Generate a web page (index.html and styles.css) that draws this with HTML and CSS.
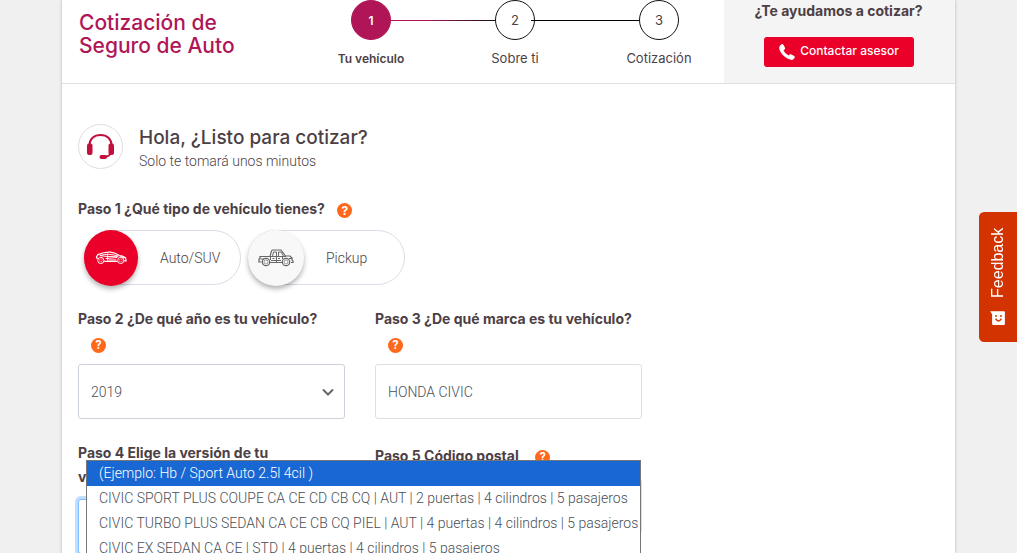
FILE: index.html
```html
<!DOCTYPE html>
<html lang="es">
<head>
<meta charset="utf-8">
<meta name="viewport" content="width=device-width, initial-scale=1">
<title>Cotización de Seguro de Auto</title>
<link rel="stylesheet" href="styles.css">
</head>
<body>
<div class="page">
  <header class="header">
    <h1 class="brand">Cotización de<br>Seguro de Auto</h1>
    <ol class="stepper">
      <li class="step step-active"><span class="step-number">1</span>Tu vehículo</li>
      <li class="connector connector-done" aria-hidden="true"></li>
      <li class="step"><span class="step-number">2</span>Sobre ti</li>
      <li class="connector connector-next" aria-hidden="true"></li>
      <li class="step"><span class="step-number">3</span>Cotización</li>
    </ol>
    <aside class="help">
      <p class="help-title">¿Te ayudamos a cotizar?</p>
      <button class="contact" type="button">
        <svg width="18" height="18" viewBox="0 0 18 18" aria-hidden="true"><path d="M2.1 2.6 3.5 1.2Q4.7.5 5.6 2L7 4.7Q7.5 5.7 6.5 6.5L5.5 7.4Q7.2 10.8 10.5 12.6L11.5 11.6Q12.4 10.8 13.4 11.4L16.2 13Q17.4 13.9 16.5 15L15.2 16.4Q13.7 17.5 10.4 16.1 3.7 13 1.4 6.6.6 4.2 2.1 2.6Z" fill="#fff"/></svg>
        <span class="contact-text">Contactar asesor</span>
      </button>
    </aside>
  </header>

  <main class="main">
    <section class="intro">
      <span class="intro-icon">
        <svg width="29" height="27" viewBox="0 0 29 27" fill="none" stroke="#c30f3d" aria-hidden="true">
          <path d="M3.5 12C3.5 6 8 2 14.5 2S25.500 6 25.500 12" stroke-width="2"/>
          <path d="M25 20Q24 23 18.500 24" stroke-width="1.800"/>
          <rect x="1" y="10.500" width="5.500" height="11.500" rx="2" fill="#c30f3d" stroke="none"/>
          <rect x="22.500" y="10.500" width="5.500" height="11.500" rx="2" fill="#c30f3d" stroke="none"/>
          <rect x="13.500" y="22" width="7.500" height="4" rx="2" fill="#c30f3d" stroke="none"/>
        </svg>
      </span>
      <div>
        <h2 class="intro-title">Hola, ¿Listo para cotizar?</h2>
        <p class="intro-text">Solo te tomará unos minutos</p>
      </div>
    </section>

    <form class="form">
      <fieldset class="vehicle">
        <legend class="label">Paso 1 ¿Qué tipo de vehículo tienes? <button class="tip" type="button" aria-label="Ayuda">?</button></legend>
        <div class="choices">
          <label class="choice">
            <input class="choice-input" type="radio" name="tipo" checked>
            <span class="choice-icon">
              <svg width="33" height="14" viewBox="0 0 34 14" fill="none" stroke="currentColor" aria-hidden="true">
                <path d="M2.500 8 1.500 6 3 3.500Q10 .5 16 1 21 1.500 25 4.500 30 5 31.500 7L32 10H30M9.500 10.500H23" stroke-width="1.300"/>
                <path d="M5 4.500Q14 1.500 24 5.200L13 5.500 5 4.500M13 2.500V10M11 7.500 23 6.500M14 9H22M26 5.500 30 7" stroke-width="1"/>
                <circle cx="6" cy="9.500" r="3.200"/><circle cx="6" cy="9.500" r="1.500" stroke-width=".5"/>
                <circle cx="26.500" cy="9.500" r="3.200"/><circle cx="26.500" cy="9.500" r="1.500" stroke-width=".5"/>
              </svg>
            </span>
            <span class="choice-text">Auto/SUV</span>
          </label>
          <label class="choice">
            <input class="choice-input" type="radio" name="tipo">
            <span class="choice-icon">
              <svg width="36" height="18" viewBox="0 0 36 18" fill="none" stroke="currentColor" stroke-width="1.200" aria-hidden="true">
                <path d="M3.500 13H1V10H2V7.500H12L13.500 2Q14 1 15 1H23L27.500 7H32L34 9V11L35 12V13.500H33M11.500 13.500H24"/>
                <path d="M14.500 7.500 15.500 3H18.500V13M20.500 7V3H23L25.500 7M12 7.500H28M12.500 8V11M24.500 8V10M3 10H6M20 9.500H22M14.500 9.500H16.500M31 9.500H34M13 11.500H23" stroke-width="1"/>
                <circle cx="8" cy="13" r="3.700"/><circle cx="8" cy="13" r="2" stroke-width=".6"/>
                <circle cx="28" cy="13" r="3.700"/><circle cx="28" cy="13" r="2" stroke-width=".6"/>
              </svg>
            </span>
            <span class="choice-text">Pickup</span>
          </label>
        </div>
      </fieldset>

      <div class="fields">
        <div class="field">
          <div class="label-row"><label class="label" for="anio">Paso 2 ¿De qué año es tu vehículo?</label> <button class="tip" type="button" aria-label="Ayuda">?</button></div>
          <div class="select-wrap">
            <select class="control control-select" id="anio"><option>2019</option></select>
            <svg class="chevron" width="12" height="8" viewBox="0 0 12 8" fill="none" stroke="#666" stroke-width="2" aria-hidden="true"><path d="M1 1.500 6 6.500 11 1.500"/></svg>
          </div>
        </div>
        <div class="field">
          <div class="label-row"><label class="label" for="marca">Paso 3 ¿De qué marca es tu vehículo?</label> <button class="tip" type="button" aria-label="Ayuda">?</button></div>
          <input class="control" id="marca" type="text" value="HONDA CIVIC">
        </div>
      </div>

      <div class="fields">
        <div class="field">
          <div class="label-row label-row-tight"><label class="label" for="version">Paso 4 Elige la versión de tu<br>vehículo</label></div>
          <div class="select-wrap">
            <select class="control control-select control-focus" id="version"><option></option></select>
            <ul class="menu" role="listbox" aria-label="Versión">
              <li class="option option-active" role="option" aria-selected="true">(Ejemplo: Hb / Sport Auto 2.5l 4cil )</li>
              <li class="option" role="option">CIVIC SPORT PLUS COUPE CA CE CD CB CQ | AUT | 2 puertas | 4 cilindros | 5 pasajeros</li>
              <li class="option" role="option">CIVIC TURBO PLUS SEDAN CA CE CB CQ PIEL | AUT | 4 puertas | 4 cilindros | 5 pasajeros</li>
              <li class="option" role="option">CIVIC EX SEDAN CA CE | STD | 4 puertas | 4 cilindros | 5 pasajeros</li>
            </ul>
          </div>
        </div>
        <div class="field">
          <div class="label-row label-row-single"><label class="label" for="cp">Paso 5 Código postal</label> <button class="tip" type="button" aria-label="Ayuda">?</button></div>
          <input class="control" id="cp" type="text">
        </div>
      </div>
    </form>
  </main>
</div>

<button class="feedback" type="button">
  <svg width="16" height="16" viewBox="0 0 16 16" aria-hidden="true"><path d="M0 1H14Q15 1 15 2V14Q15 15 14 15H3Q2 15 2 14V4Z" fill="#fff"/><path d="M5.500 8.500Q8.500 13.500 11.500 8.500" fill="none" stroke="#d33300" stroke-width="1.500"/><path d="M5 5H7V6.500H5ZM10 5H12V6.500H10Z" fill="#d33300"/></svg>
  <span class="feedback-text">Feedback</span>
</button>
</body>
</html>
```
FILE: styles.css
```css
* { box-sizing: border-box; }

body {
  margin: 0;
  height: 100vh;
  overflow: hidden;
  background: #f0f0f0;
  color: #4c3f45;
  font-family: Roboto, "Liberation Sans", sans-serif;
  font-size: 14px;
  font-weight: 300;
}

h1, h2, p, ol, ul { margin: 0; padding: 0; }
ol, ul { list-style: none; }
button, input, select { font: inherit; color: inherit; }

.page {
  min-height: 100vh;
  margin: 0 62px;
  background: #fff;
  box-shadow: 0 0 3px rgba(0, 0, 0, 0.25);
}

.header {
  display: flex;
  height: 84px;
  border-bottom: 1px solid #e0e0e0;
  font-family: Inter, "Open Sans", sans-serif;
}

.brand {
  width: 237px;
  padding: 11px 0 0 17px;
  color: #b01657;
  font-size: 21px;
  font-weight: 500;
  line-height: 23px;
}

.stepper {
  flex: 1;
  display: grid;
  grid-template-columns: 100px 1fr 100px 1fr 100px;
  padding: 0 15px 0 22px;
}

.step {
  display: flex;
  flex-direction: column;
  align-items: center;
  gap: 10px;
  font-size: 13px;
  font-weight: 400;
  line-height: 17px;
  white-space: nowrap;
}

.step-number {
  width: 40px;
  height: 40px;
  border: 1px solid #111;
  border-radius: 50%;
  line-height: 39px;
  text-align: center;
}

.step-active { font-size: 12px; font-weight: 600; }
.step-active .step-number { border-color: #b01657; background: #b01657; color: #fff; }

.connector { height: 1px; margin: 20px -30px 0; }
.connector-done { background: linear-gradient(to right, #b01657, #b01657 30%, #111); }
.connector-next { margin-left: -34px; background: #000; }

.help {
  display: flex;
  flex-direction: column;
  align-items: center;
  gap: 17px;
  width: 231px;
  padding: 2px 2px 0 0;
  background: #f4f4f4;
}

.help-title { font-size: 14px; font-weight: 700; line-height: 18px; }

.contact {
  display: flex;
  align-items: center;
  justify-content: center;
  gap: 4px;
  width: 150px;
  height: 30px;
  padding: 0;
  border: 0;
  border-radius: 3px;
  background: #eb0029;
  color: #fff;
  font-size: 12px;
  font-weight: 500;
  white-space: nowrap;
}

.contact-text { padding-bottom: 3px; }

.main { padding: 40px 16px 0; }

.intro { display: flex; gap: 16px; }

.intro-icon {
  display: flex;
  align-items: center;
  justify-content: center;
  width: 45px;
  height: 45px;
  border: 1px solid #dedee3;
  border-radius: 50%;
}

.intro-title {
  padding-top: 2px;
  font-family: Inter, "Open Sans", sans-serif;
  font-size: 19px;
  font-weight: 500;
  line-height: 24px;
}

.intro-text { line-height: 22px; }

.form { max-width: 564px; }

.vehicle { margin: 0; padding: 24px 0 0; border: 0; }
.vehicle legend { float: left; width: 100%; padding: 0; }

.label {
  font-family: Inter, "Open Sans", sans-serif;
  font-size: 14px;
  font-weight: 700;
  line-height: 25px;
}

.tip {
  width: 15px;
  height: 15px;
  margin-left: 9px;
  padding: 0;
  border: 0;
  border-radius: 50%;
  background: #ff671b;
  color: #fff;
  font-size: 12px;
  font-weight: 700;
  line-height: 15px;
  vertical-align: middle;
}

.choices { clear: both; display: flex; gap: 7px; padding: 9px 0 0 6px; }

.choice {
  display: flex;
  align-items: center;
  width: 157px;
  height: 55px;
  border: 1px solid #d9dde5;
  border-radius: 28px;
}

.choice-input { position: absolute; opacity: 0; }

.choice-icon {
  display: flex;
  align-items: center;
  justify-content: center;
  width: 56px;
  height: 56px;
  margin-left: -1px;
  border-radius: 50%;
  background: #f8f8f8;
  color: #666;
  box-shadow: 0 3px 5px rgba(0, 0, 0, 0.3);
}

.choice-input:checked + .choice-icon { width: 54px; background: #eb0029; color: #fff; }

.choice-text { margin-left: 22px; }

.fields {
  display: grid;
  grid-template-columns: repeat(2, minmax(0, 1fr));
  gap: 30px;
  padding-top: 21px;
}

.label-row { min-height: 58px; line-height: 25px; }
.field .label { white-space: nowrap; }
.field .tip { margin-left: 13px; }

.control {
  display: block;
  width: 100%;
  height: 55px;
  padding: 0 12px;
  border: 1px solid #dcdfe6;
  border-radius: 3px;
  background: #fff;
  color: #495057;
}

.select-wrap { position: relative; }
.control-select { appearance: none; border-color: #ccd2da; }
.chevron { position: absolute; top: 24px; right: 11px; pointer-events: none; }

.fields + .fields { padding-top: 22px; }
.label-row-tight .label { display: block; line-height: 24px; }
.label-row-single { min-height: 38px; padding-top: 2px; }
.control-focus { border-color: #80bdff; box-shadow: 0 0 0 3px #bfdeff; }

.menu {
  position: absolute;
  top: -39px;
  left: 8px;
  width: 555px;
  border: 1px solid #767676;
  background: #fff;
  color: #495057;
}

.option { padding: 0 12px; line-height: 25px; white-space: nowrap; }
.option-active { background: #1967d2; color: #fff; }

.feedback {
  position: fixed;
  top: 212px;
  right: 0;
  display: flex;
  align-items: center;
  gap: 12px;
  width: 38px;
  height: 130px;
  padding: 16px 0;
  border: 0;
  border-radius: 0 5px 5px 0;
  background: #d33300;
  color: #fff;
  font-family: "Liberation Sans", Arial, sans-serif;
  font-size: 16px;
  font-weight: 400;
  writing-mode: vertical-rl;
  transform: rotate(180deg);
}

.feedback svg { transform: rotate(180deg); }
```
